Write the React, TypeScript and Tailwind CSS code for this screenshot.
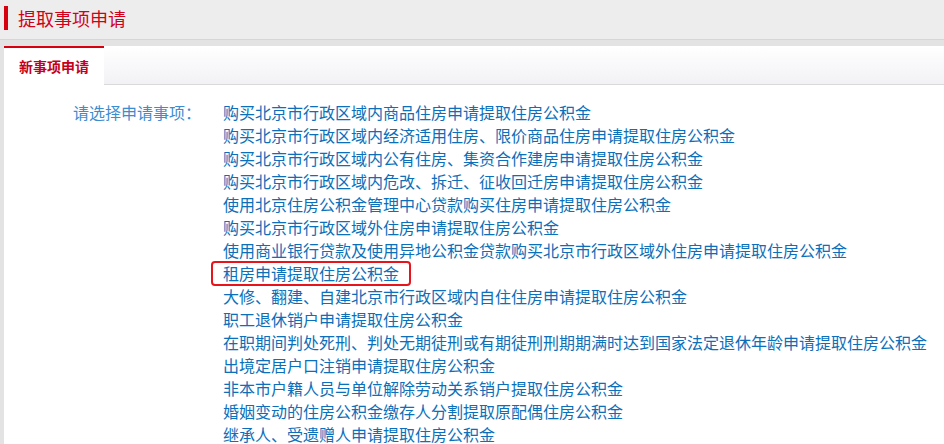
import React from 'react';

const items = [
  '购买北京市行政区域内商品住房申请提取住房公积金',
  '购买北京市行政区域内经济适用住房、限价商品住房申请提取住房公积金',
  '购买北京市行政区域内公有住房、集资合作建房申请提取住房公积金',
  '购买北京市行政区域内危改、拆迁、征收回迁房申请提取住房公积金',
  '使用北京住房公积金管理中心贷款购买住房申请提取住房公积金',
  '购买北京市行政区域外住房申请提取住房公积金',
  '使用商业银行贷款及使用异地公积金贷款购买北京市行政区域外住房申请提取住房公积金',
  '租房申请提取住房公积金',
  '大修、翻建、自建北京市行政区域内自住住房申请提取住房公积金',
  '职工退休销户申请提取住房公积金',
  '在职期间判处死刑、判处无期徒刑或有期徒刑刑期期满时达到国家法定退休年龄申请提取住房公积金',
  '出境定居户口注销申请提取住房公积金',
  '非本市户籍人员与单位解除劳动关系销户提取住房公积金',
  '婚姻变动的住房公积金缴存人分割提取原配偶住房公积金',
  '继承人、受遗赠人申请提取住房公积金',
];

export default function App() {
  return (
    <div className="h-[444px] w-[944px] overflow-hidden bg-[#e3e3e3] font-['Noto_Sans_CJK_SC','Noto_Sans',sans-serif] flex flex-col">
      {/* Page header */}
      <div className="h-[40px] shrink-0 bg-[#ededed] border-b border-[#d6d6d6] flex items-start pt-[6px] pl-[4px]">
        <div className="w-[4px] h-[24px] bg-[#d7000f]" />
        <h1 className="ml-[10px] text-[18px] leading-[24px] text-[#d0021b] font-normal">提取事项申请</h1>
      </div>

      {/* Panel */}
      <div className="mt-[6px] ml-[4px] flex-1 bg-white flex flex-col">
        <div className="h-[39px] shrink-0 flex border-b border-[#d9d9d9] bg-gradient-to-b from-white to-[#f2f2f6]">
          <div className="w-[100px] h-[39px] border-t-2 border-[#d7000f] bg-white flex items-center pl-[15px]">
            <span className="text-[14px] font-bold text-[#c4001a]">新事项申请</span>
          </div>
        </div>

        <div className="flex pt-[16px]">
          <div className="w-[197px] shrink-0 text-right text-[16px] leading-[23px] text-[#3c8dd0]">请选择申请事项：</div>
          <ul className="ml-[22px] flex flex-col text-[16px] leading-[23px] text-[#0b6fba]">
            {items.map((item) => (
              <li key={item} className="whitespace-nowrap">
                {item === '租房申请提取住房公积金' ? (
                  <span className="relative inline-block">
                    {item}
                    <span className="absolute -left-[12px] -right-[12px] -top-[1px] -bottom-[1px] border-2 border-[#e8141b] rounded-[4px]" />
                  </span>
                ) : (
                  item
                )}
              </li>
            ))}
          </ul>
        </div>
      </div>

      <div className="h-[2px] shrink-0 bg-[#e2b884]" />
    </div>
  );
}
